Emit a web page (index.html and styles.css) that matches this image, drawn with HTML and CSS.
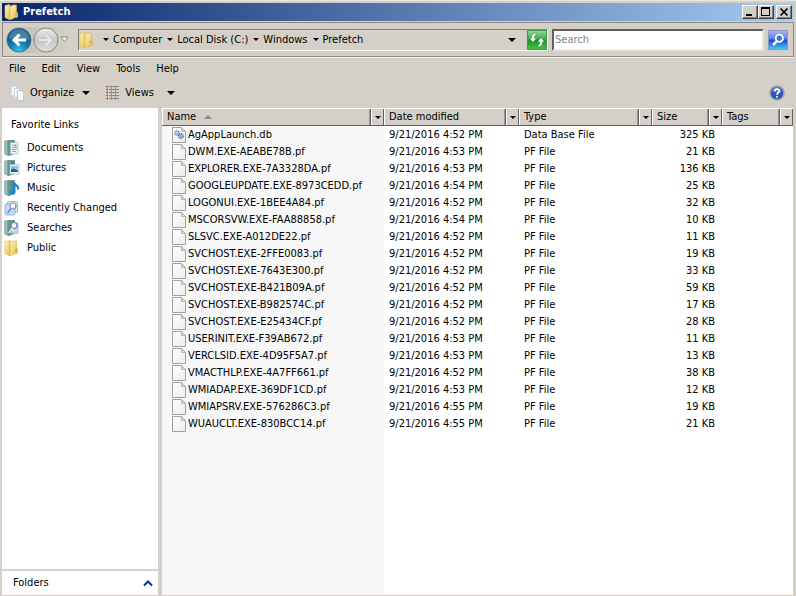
FILE: index.html
```html
<!DOCTYPE html>
<html lang="en">

<head>
    <meta charset="UTF-8">
    <meta name="viewport" content="width=device-width, initial-scale=1.0">
    <title>Prefetch</title>
    <link rel="stylesheet" href="styles.css">
</head>

<body>
    <svg class="sprite" aria-hidden="true">
        <defs>
            <linearGradient id="gold" x1="0" x2="1" y1="0" y2="1">
                <stop offset="0" stop-color="#fff8c4" />
                <stop offset="1" stop-color="#e6c048" />
            </linearGradient>
            <linearGradient id="teal" x1="0" x2="1">
                <stop offset="0" stop-color="#76a59a" />
                <stop offset="1" stop-color="#417b7c" />
            </linearGradient>
            <linearGradient id="paper" x1="0" x2="1" y1="0" y2="1">
                <stop offset="0" stop-color="#ffffff" />
                <stop offset="1" stop-color="#ececec" />
            </linearGradient>
            <radialGradient id="ball" cx=".5" cy=".95" r=".9">
                <stop offset="0" stop-color="#2cc8f4" />
                <stop offset=".45" stop-color="#1476a8" />
                <stop offset="1" stop-color="#164f78" />
            </radialGradient>
            <linearGradient id="silver" x1="0" x2="0" y1="0" y2="1">
                <stop offset="0" stop-color="#eeeeee" />
                <stop offset=".5" stop-color="#c6c6c6" />
                <stop offset="1" stop-color="#dedede" />
            </linearGradient>
        </defs>
        <symbol id="folder" viewBox="0 0 16 16">
            <path d="M1 1.500 6 .5v13l-1 2-4-2z" fill="url(#gold)" stroke="#d8b74a" stroke-width=".6" />
            <path d="M6 2.500 9 1h3.500v12L7 15.500H5l1-2z" fill="url(#gold)" stroke="#d2ae42" stroke-width=".6" />
            <path d="M12.500 7.500 14 9v4l-2 1V9z" fill="#e6c24a" />
            <path d="M12 9v2" stroke="#5aa0c8" />
        </symbol>
        <symbol id="file" viewBox="0 0 14 16">
            <path d="M.5 .5h9l4 4v11H.5z" fill="url(#paper)" stroke="#a0a0a0" />
            <path d="M9.500 .5v4h4z" fill="#d8d8d8" stroke="#a5a5a5" stroke-width=".7" />
        </symbol>
        <symbol id="db" viewBox="0 0 14 16">
            <path d="M.5 .5h9l4 4v11H.5z" fill="url(#paper)" stroke="#a0a0a0" />
            <path d="M9.500 .5v4h4z" fill="#d8d8d8" stroke="#a5a5a5" stroke-width=".7" />
            <circle cx="5" cy="6" r="2.200" fill="#d5e7f5" stroke="#4a7ba8" stroke-width="1.200" stroke-dasharray="1.200 .5" />
            <circle cx="8.800" cy="9" r="2.400" fill="#b5d2ea" stroke="#396a9a" stroke-width="1.200" stroke-dasharray="1.200 .5" />
            <circle cx="5" cy="6" r=".6" fill="#396a9a" />
            <circle cx="8.800" cy="9" r=".7" fill="#396a9a" />
        </symbol>
        <symbol id="binder" viewBox="0 0 16 16">
            <path d="M.5 1 4 .5v15L.5 14z" fill="#9fc0b4" stroke="#6f9c92" stroke-width=".6" />
            <path d="M4 .5h6.500v13L5 15.500H4z" fill="url(#teal)" stroke="#4b7d79" stroke-width=".6" />
        </symbol>
        <symbol id="documents" viewBox="0 0 16 16">
            <use href="#binder" />
            <path d="M6.500 2.500h7.500v11.500H6.500z" fill="#f5f8fb" stroke="#a9b4bd" stroke-width=".7" />
            <path d="M8 5h2M8 7.500h5M8 9.500h5M8 11.500h4" stroke="#8aa5c0" />
            <path d="M10.500 4.500h2v2h-2z" fill="#5a93c8" />
        </symbol>
        <symbol id="pictures" viewBox="0 0 16 16">
            <use href="#binder" />
            <path d="M6 4.500h9v9.500H6z" fill="#f7fafc" stroke="#a3aeb8" stroke-width=".7" />
            <path d="M7 6h7v6H7z" fill="#86c5ec" />
            <path d="M7 9.500 9.500 8.500 14 10.500V12H7z" fill="#255f86" />
        </symbol>
        <symbol id="music" viewBox="0 0 16 16">
            <use href="#binder" />
            <path d="M10.500 12V3c.5 2.500 5 3 3.500 6.500" fill="none" stroke="#1688d8" stroke-width="2" />
            <ellipse cx="8.500" cy="12.300" rx="2.900" ry="2.300" fill="#1688d8" />
        </symbol>
        <symbol id="recent" viewBox="0 0 16 16">
            <rect x="3.500" y="1.500" width="10" height="11" rx="1.500" fill="#dceafa" stroke="#9dbbe2" />
            <rect x="1" y="4" width="10" height="11" rx="1.500" fill="#c6dbf5" stroke="#8fb0dc" />
            <circle cx="9" cy="6" r="3" fill="#f2f8ff" stroke="#8399bb" stroke-width="1.200" />
            <path d="M7 8.500 3.500 13" stroke="#6f87ac" stroke-width="1.600" />
        </symbol>
        <symbol id="searches" viewBox="0 0 16 16">
            <use href="#binder" />
            <path d="M7.500 3H14v10.500H7.500z" fill="#c4d9ee" stroke="#8aa9c8" stroke-width=".7" />
            <circle cx="10" cy="5.500" r="3" fill="#eaf4ff" stroke="#6b89ab" stroke-width="1.200" />
            <path d="M8.500 8 5 13" stroke="#dbe8f2" stroke-width="1.800" />
        </symbol>
    </svg>

    <div class="window">
        <header class="titlebar">
            <svg class="icon"><use href="#folder" /></svg>
            <h1>Prefetch</h1>
            <div class="caption-buttons">
                <button class="caption" aria-label="Minimize"><svg viewBox="0 0 12 10"><path d="M2 7h6v2H2z" /></svg></button>
                <button class="caption" aria-label="Maximize"><svg viewBox="0 0 12 10"><path d="M1 0h9v9H1zM2 2v6h7V2z" fill-rule="evenodd" /></svg></button>
                <button class="caption close" aria-label="Close"><svg viewBox="0 0 12 10"><path d="m2.500 1.500 7 7m0-7-7 7" fill="none" stroke="#000" stroke-width="1.700" /></svg></button>
            </div>
        </header>

        <nav class="navbar">
            <div class="travel">
                <button class="round" aria-label="Back">
                    <svg viewBox="0 0 26 26">
                        <circle cx="13" cy="13" r="12" fill="url(#ball)" stroke="#54748c" />
                        <path d="M3 12a10 10 0 0 1 20 0c-5 2-14-3-20 0z" fill="#fff" opacity=".22" />
                        <path d="M20 13H8m5.500-5.500L8 13l5.500 5.500" fill="none" stroke="#fff" stroke-width="3" />
                    </svg>
                </button>
                <button class="round" aria-label="Forward">
                    <svg viewBox="0 0 26 26">
                        <circle cx="13" cy="13" r="12" fill="url(#silver)" stroke="#858585" />
                        <path d="M6 13h12m-5.500-5.500L18 13l-5.500 5.500" fill="none" stroke="#b4b4b4" stroke-width="3.600" />
                        <path d="M6 13h12m-5.500-5.500L18 13l-5.500 5.500" fill="none" stroke="#e6e6e6" stroke-width="2.600" />
                    </svg>
                </button>
                <button class="history" aria-label="Recent pages">
                    <svg viewBox="0 0 9 7"><path d="M.8 1h7.400L4.500 5.500z" fill="#f4f4f4" stroke="#8b8b8b" /></svg>
                </button>
            </div>
            <div class="address">
                <svg class="icon"><use href="#folder" /></svg>
                <ol class="crumbs">
                    <li><a href="#">Computer</a></li>
                    <li><a href="#">Local Disk (C:)</a></li>
                    <li><a href="#">Windows</a></li>
                    <li><a href="#">Prefetch</a></li>
                </ol>
                <button class="drop" aria-label="Previous locations"><span class="arrow big"></span></button>
                <button class="refresh" aria-label="Refresh">
                    <svg viewBox="0 0 20 20"><path d="M9 2.500v2c-1.500 0-2 .8-2 3.500h2.500L5.500 12.500 1.500 8H4c0-4 1.500-5.500 5-5.500zM11 17.500v-2c1.500 0 2-.8 2-3.500h-2.500l4-4.500 4 4.500H16c0 4-1.500 5.500-5 5.500z" fill="#fff" stroke="#2b8a35" stroke-width=".5" /></svg>
                </button>
            </div>
            <input class="search" type="text" placeholder="Search" aria-label="Search">
            <button class="go" aria-label="Start search">
                <svg viewBox="0 0 20 20"><path d="M9 11 4.500 15.500" stroke="#fff" stroke-width="3" /><circle cx="11.500" cy="8" r="4" fill="#3f74e0" stroke="#fff" stroke-width="2" /></svg>
            </button>
        </nav>

        <div class="menubar">
            <button>File</button>
            <button>Edit</button>
            <button>View</button>
            <button>Tools</button>
            <button>Help</button>
        </div>

        <div class="toolbar">
            <button class="tool">
                <svg class="icon" viewBox="0 0 16 16">
                    <path d="M1.500 1.500h5v9h-5z" fill="#f3f8fb" stroke="#d3dfe8" />
                    <path d="M4.500 3.500h5v9h-5z" fill="#f3f8fb" stroke="#c4d5e2" />
                    <path d="M7.500 5.500h4l2 2v8h-6z" fill="#f8fbfd" stroke="#b2c9da" />
                </svg>
                Organize <span class="arrow big"></span>
            </button>
            <button class="tool views">
                <svg class="icon" viewBox="0 0 16 16">
                    <path d="M2.500 1v14M6.500 1v14M10.500 1v14" stroke="#999" />
                    <path d="M1 1.500h2M1 4.500h2M1 7.500h2M1 10.500h2M1 13.500h2" stroke="#a35b5b" />
                    <path d="M4 1.500h10M4 4.500h10M4 7.500h10M4 10.500h10M4 13.500h10" stroke="#858585" />
                </svg>
                Views <span class="arrow big"></span>
            </button>
            <button class="help" aria-label="Get help">
                <svg viewBox="0 0 16 16">
                    <circle cx="8" cy="8" r="7" fill="#2f55b0" stroke="#9aa3b5" stroke-width="1.500" />
                    <path d="M3 7a5 5 0 0 1 10 0c-3 1-7-1-10 0z" fill="#fff" opacity=".25" />
                    <path d="M5.800 6.200C6 3.400 10.400 3.600 10.200 6.200 10 7.800 8 7.800 8 9.700M8 11v1.800" fill="none" stroke="#fff" stroke-width="1.700" />
                </svg>
            </button>
        </div>

        <div class="content">
            <aside class="sidebar">
                <h2>Favorite Links</h2>
                <ul class="links">
                    <li><a href="#"><svg class="icon"><use href="#documents" /></svg>Documents</a></li>
                    <li><a href="#"><svg class="icon"><use href="#pictures" /></svg>Pictures</a></li>
                    <li><a href="#"><svg class="icon"><use href="#music" /></svg>Music</a></li>
                    <li><a href="#"><svg class="icon"><use href="#recent" /></svg>Recently Changed</a></li>
                    <li><a href="#"><svg class="icon"><use href="#searches" /></svg>Searches</a></li>
                    <li><a href="#"><svg class="icon"><use href="#folder" /></svg>Public</a></li>
                </ul>
                <button class="folders">
                    Folders
                    <svg viewBox="0 0 10 7"><path d="m1 5.500 4-4 4 4" fill="none" stroke="#0a2f9c" stroke-width="2" /></svg>
                </button>
            </aside>

            <main class="files">
                <table>
                    <colgroup>
                        <col class="col-name">
                        <col class="col-date">
                        <col class="col-type">
                        <col class="col-size">
                        <col>
                    </colgroup>
                    <thead>
                        <tr>
                            <th><div class="head"><span>Name <i class="sort"></i></span><button aria-label="Filter by name"><i class="arrow"></i></button></div></th>
                            <th><div class="head"><span>Date modified</span><button aria-label="Filter by date"><i class="arrow"></i></button></div></th>
                            <th><div class="head"><span>Type</span><button aria-label="Filter by type"><i class="arrow"></i></button></div></th>
                            <th><div class="head"><span>Size</span><button aria-label="Filter by size"><i class="arrow"></i></button></div></th>
                            <th><div class="head"><span>Tags</span><button aria-label="Filter by tags"><i class="arrow"></i></button></div></th>
                        </tr>
                    </thead>
                    <tbody>
                        <tr><td><svg><use href="#db" /></svg>AgAppLaunch.db</td><td>9/21/2016 4:52 PM</td><td>Data Base File</td><td>325 KB</td><td></td></tr>
                        <tr><td><svg><use href="#file" /></svg>DWM.EXE-AEABE78B.pf</td><td>9/21/2016 4:53 PM</td><td>PF File</td><td>21 KB</td><td></td></tr>
                        <tr><td><svg><use href="#file" /></svg>EXPLORER.EXE-7A3328DA.pf</td><td>9/21/2016 4:53 PM</td><td>PF File</td><td>136 KB</td><td></td></tr>
                        <tr><td><svg><use href="#file" /></svg>GOOGLEUPDATE.EXE-8973CEDD.pf</td><td>9/21/2016 4:54 PM</td><td>PF File</td><td>25 KB</td><td></td></tr>
                        <tr><td><svg><use href="#file" /></svg>LOGONUI.EXE-1BEE4A84.pf</td><td>9/21/2016 4:52 PM</td><td>PF File</td><td>32 KB</td><td></td></tr>
                        <tr><td><svg><use href="#file" /></svg>MSCORSVW.EXE-FAA88858.pf</td><td>9/21/2016 4:54 PM</td><td>PF File</td><td>10 KB</td><td></td></tr>
                        <tr><td><svg><use href="#file" /></svg>SLSVC.EXE-A012DE22.pf</td><td>9/21/2016 4:52 PM</td><td>PF File</td><td>11 KB</td><td></td></tr>
                        <tr><td><svg><use href="#file" /></svg>SVCHOST.EXE-2FFE0083.pf</td><td>9/21/2016 4:52 PM</td><td>PF File</td><td>19 KB</td><td></td></tr>
                        <tr><td><svg><use href="#file" /></svg>SVCHOST.EXE-7643E300.pf</td><td>9/21/2016 4:52 PM</td><td>PF File</td><td>33 KB</td><td></td></tr>
                        <tr><td><svg><use href="#file" /></svg>SVCHOST.EXE-B421B09A.pf</td><td>9/21/2016 4:52 PM</td><td>PF File</td><td>59 KB</td><td></td></tr>
                        <tr><td><svg><use href="#file" /></svg>SVCHOST.EXE-B982574C.pf</td><td>9/21/2016 4:52 PM</td><td>PF File</td><td>17 KB</td><td></td></tr>
                        <tr><td><svg><use href="#file" /></svg>SVCHOST.EXE-E25434CF.pf</td><td>9/21/2016 4:52 PM</td><td>PF File</td><td>28 KB</td><td></td></tr>
                        <tr><td><svg><use href="#file" /></svg>USERINIT.EXE-F39AB672.pf</td><td>9/21/2016 4:53 PM</td><td>PF File</td><td>11 KB</td><td></td></tr>
                        <tr><td><svg><use href="#file" /></svg>VERCLSID.EXE-4D95F5A7.pf</td><td>9/21/2016 4:53 PM</td><td>PF File</td><td>13 KB</td><td></td></tr>
                        <tr><td><svg><use href="#file" /></svg>VMACTHLP.EXE-4A7FF661.pf</td><td>9/21/2016 4:52 PM</td><td>PF File</td><td>38 KB</td><td></td></tr>
                        <tr><td><svg><use href="#file" /></svg>WMIADAP.EXE-369DF1CD.pf</td><td>9/21/2016 4:53 PM</td><td>PF File</td><td>12 KB</td><td></td></tr>
                        <tr><td><svg><use href="#file" /></svg>WMIAPSRV.EXE-576286C3.pf</td><td>9/21/2016 4:55 PM</td><td>PF File</td><td>19 KB</td><td></td></tr>
                        <tr><td><svg><use href="#file" /></svg>WUAUCLT.EXE-830BCC14.pf</td><td>9/21/2016 4:55 PM</td><td>PF File</td><td>21 KB</td><td></td></tr>
                    </tbody>
                </table>
            </main>
        </div>
    </div>
</body>

</html>
```

FILE: styles.css
```css
* {
    box-sizing: border-box;
    margin: 0;
    padding: 0;
}

body {
    font: 11px/16px Tahoma, "DejaVu Sans Condensed", "DejaVu Sans", sans-serif;
    color: #000;
    background: #d4d0c8;
}

button {
    font: inherit;
    color: inherit;
    background: none;
    border: 0;
}

a {
    color: inherit;
    text-decoration: none;
}

ul, ol {
    list-style: none;
}

svg {
    display: block;
    flex: none;
}

.sprite {
    position: absolute;
    width: 0;
    height: 0;
}

.icon {
    width: 16px;
    height: 16px;
}

.arrow {
    display: block;
    border: 3px solid transparent;
    border-top-color: #000;
    border-bottom: 0;
}

.arrow.big {
    border-width: 4px;
    border-bottom: 0;
}

.window {
    display: flex;
    flex-direction: column;
    height: 100vh;
    padding: 2px 2px 1px;
    border-top: 1px solid #e9e7e3;
}

/* title bar */
.titlebar {
    display: flex;
    align-items: center;
    gap: 3px;
    height: 18px;
    padding: 0 2px;
    background: linear-gradient(to right, #0a246a, #a6caf0);
}

.titlebar h1 {
    flex: 1;
    font-size: 11px;
    font-weight: bold;
    color: #fff;
}

.caption-buttons {
    display: flex;
}

.caption {
    width: 16px;
    height: 14px;
    padding: 1px;
    background: #d4d0c8;
    border: 1px solid;
    border-color: #fff #404040 #404040 #fff;
    box-shadow: inset -1px -1px #808080;
}

.caption.close {
    margin-left: 2px;
}

.caption svg {
    width: 12px;
    height: 10px;
}

/* address row */
.navbar {
    display: flex;
    align-items: center;
    height: 35px;
    margin-top: 1px;
    padding: 0 5px 0 3px;
    border: 1px solid #8c8984;
    box-shadow: 0 1px #f4f2ee;
}

.travel {
    display: flex;
    align-items: center;
    gap: 1px;
    margin-right: 9px;
    border-radius: 13px;
    background: linear-gradient(to right, #bdbab5, #d4d0c8);
}

.round, .round svg {
    width: 26px;
    height: 26px;
}

.history svg {
    width: 9px;
    height: 7px;
}

.address {
    display: flex;
    flex: 1;
    align-items: center;
    height: 22px;
    border: 1px solid;
    border-color: #808080 #fff #fff #808080;
}

.crumbs {
    display: flex;
    flex: 1;
    margin-left: 8px;
}

.crumbs li {
    display: flex;
    align-items: center;
    margin-right: 5px;
}

.crumbs li::before {
    content: "";
    margin-right: 4px;
    border: 3px solid transparent;
    border-top-color: #000;
    border-bottom: 0;
}

.drop {
    display: flex;
    justify-content: center;
    width: 30px;
}

.refresh, .go {
    width: 20px;
    height: 20px;
    border: 1px solid #3f9c4c;
    background: linear-gradient(#8fd79a, #3aad4a 45%, #18912a 50%, #46c13c);
}

.go {
    border-color: #8b95c8;
    background: linear-gradient(#a9b4f4, #5a78e4 45%, #1b45cc 50%, #46c8f4);
}

.refresh svg, .go svg {
    width: 18px;
    height: 18px;
}

.search {
    width: 212px;
    height: 22px;
    margin: 0 4px;
    padding: 0 1px;
    font: inherit;
    background: #fff;
    border: 2px solid;
    border-color: #606060 #e8e6e0 #e8e6e0 #606060;
}

.search::placeholder {
    color: #858585;
    opacity: 1;
}

/* menu and command bar */
.menubar {
    display: flex;
    align-items: center;
    gap: 16px;
    height: 23px;
    padding-left: 7px;
}

.toolbar {
    display: flex;
    align-items: center;
    height: 28px;
    padding: 0 9px 2px 8px;
}

.tool {
    display: flex;
    align-items: center;
    gap: 4px;
}

.tool .arrow {
    margin-left: 4px;
}

.views {
    margin-left: 15px;
}

.views .arrow {
    margin-left: 9px;
}

.help {
    margin-left: auto;
}

.help svg {
    width: 16px;
    height: 16px;
}

/* panes */
.content {
    display: flex;
    flex: 1;
    gap: 4px;
    min-height: 0;
    padding-right: 1px;
}

.sidebar {
    display: flex;
    flex-direction: column;
    width: 156px;
    background: #fff;
}

.sidebar h2 {
    padding: 9px 9px 5px;
    font-size: 11px;
    font-weight: normal;
}

.links {
    flex: 1;
}

.links a {
    display: flex;
    align-items: center;
    gap: 7px;
    height: 20px;
    padding-left: 2px;
}

.folders {
    display: flex;
    align-items: center;
    justify-content: space-between;
    height: 26px;
    padding: 0 5px 0 11px;
    border-top: 2px solid #d4d0c8;
}

.folders svg {
    width: 10px;
    height: 7px;
}

.files {
    flex: 1;
    min-width: 0;
    overflow: hidden;
    /* the sorted column stays shaded down to the bottom */
    background: linear-gradient(#f7f7f7, #f7f7f7) 0 0 / 222px 100% no-repeat #fff;
}

table {
    width: 100%;
    table-layout: fixed;
    border-collapse: collapse;
}

.col-name {
    width: 222px;
}

.col-date {
    width: 135px;
}

.col-type {
    width: 133px;
}

.col-size {
    width: 70px;
}

th {
    font-weight: normal;
    text-align: left;
}

.head {
    display: flex;
    height: 18px;
    background: #d4d0c8;
    border-top: 1px solid #fff;
    border-bottom: 1px solid #606060;
}

.head span {
    display: flex;
    flex: 1;
    align-items: center;
    gap: 8px;
    padding-left: 4px;
    border-left: 1px solid #fff;
    border-right: 1px solid #606060;
    box-shadow: inset -1px 0 #9a9790;
}

.head button {
    display: flex;
    align-items: center;
    justify-content: center;
    width: 13px;
    border-left: 1px solid #fff;
    border-right: 1px solid #606060;
}

.sort {
    border: 4px solid transparent;
    border-top: 0;
    border-bottom-color: #8c8984;
}

td {
    height: 17px;
    padding-left: 5px;
    line-height: 17px;
    white-space: nowrap;
}

td:first-child {
    display: flex;
    align-items: center;
    gap: 2px;
    padding-left: 10px;
}

td:nth-child(4) {
    padding: 0 7px 0 0;
    text-align: right;
}

td svg {
    width: 14px;
    height: 16px;
}
```
